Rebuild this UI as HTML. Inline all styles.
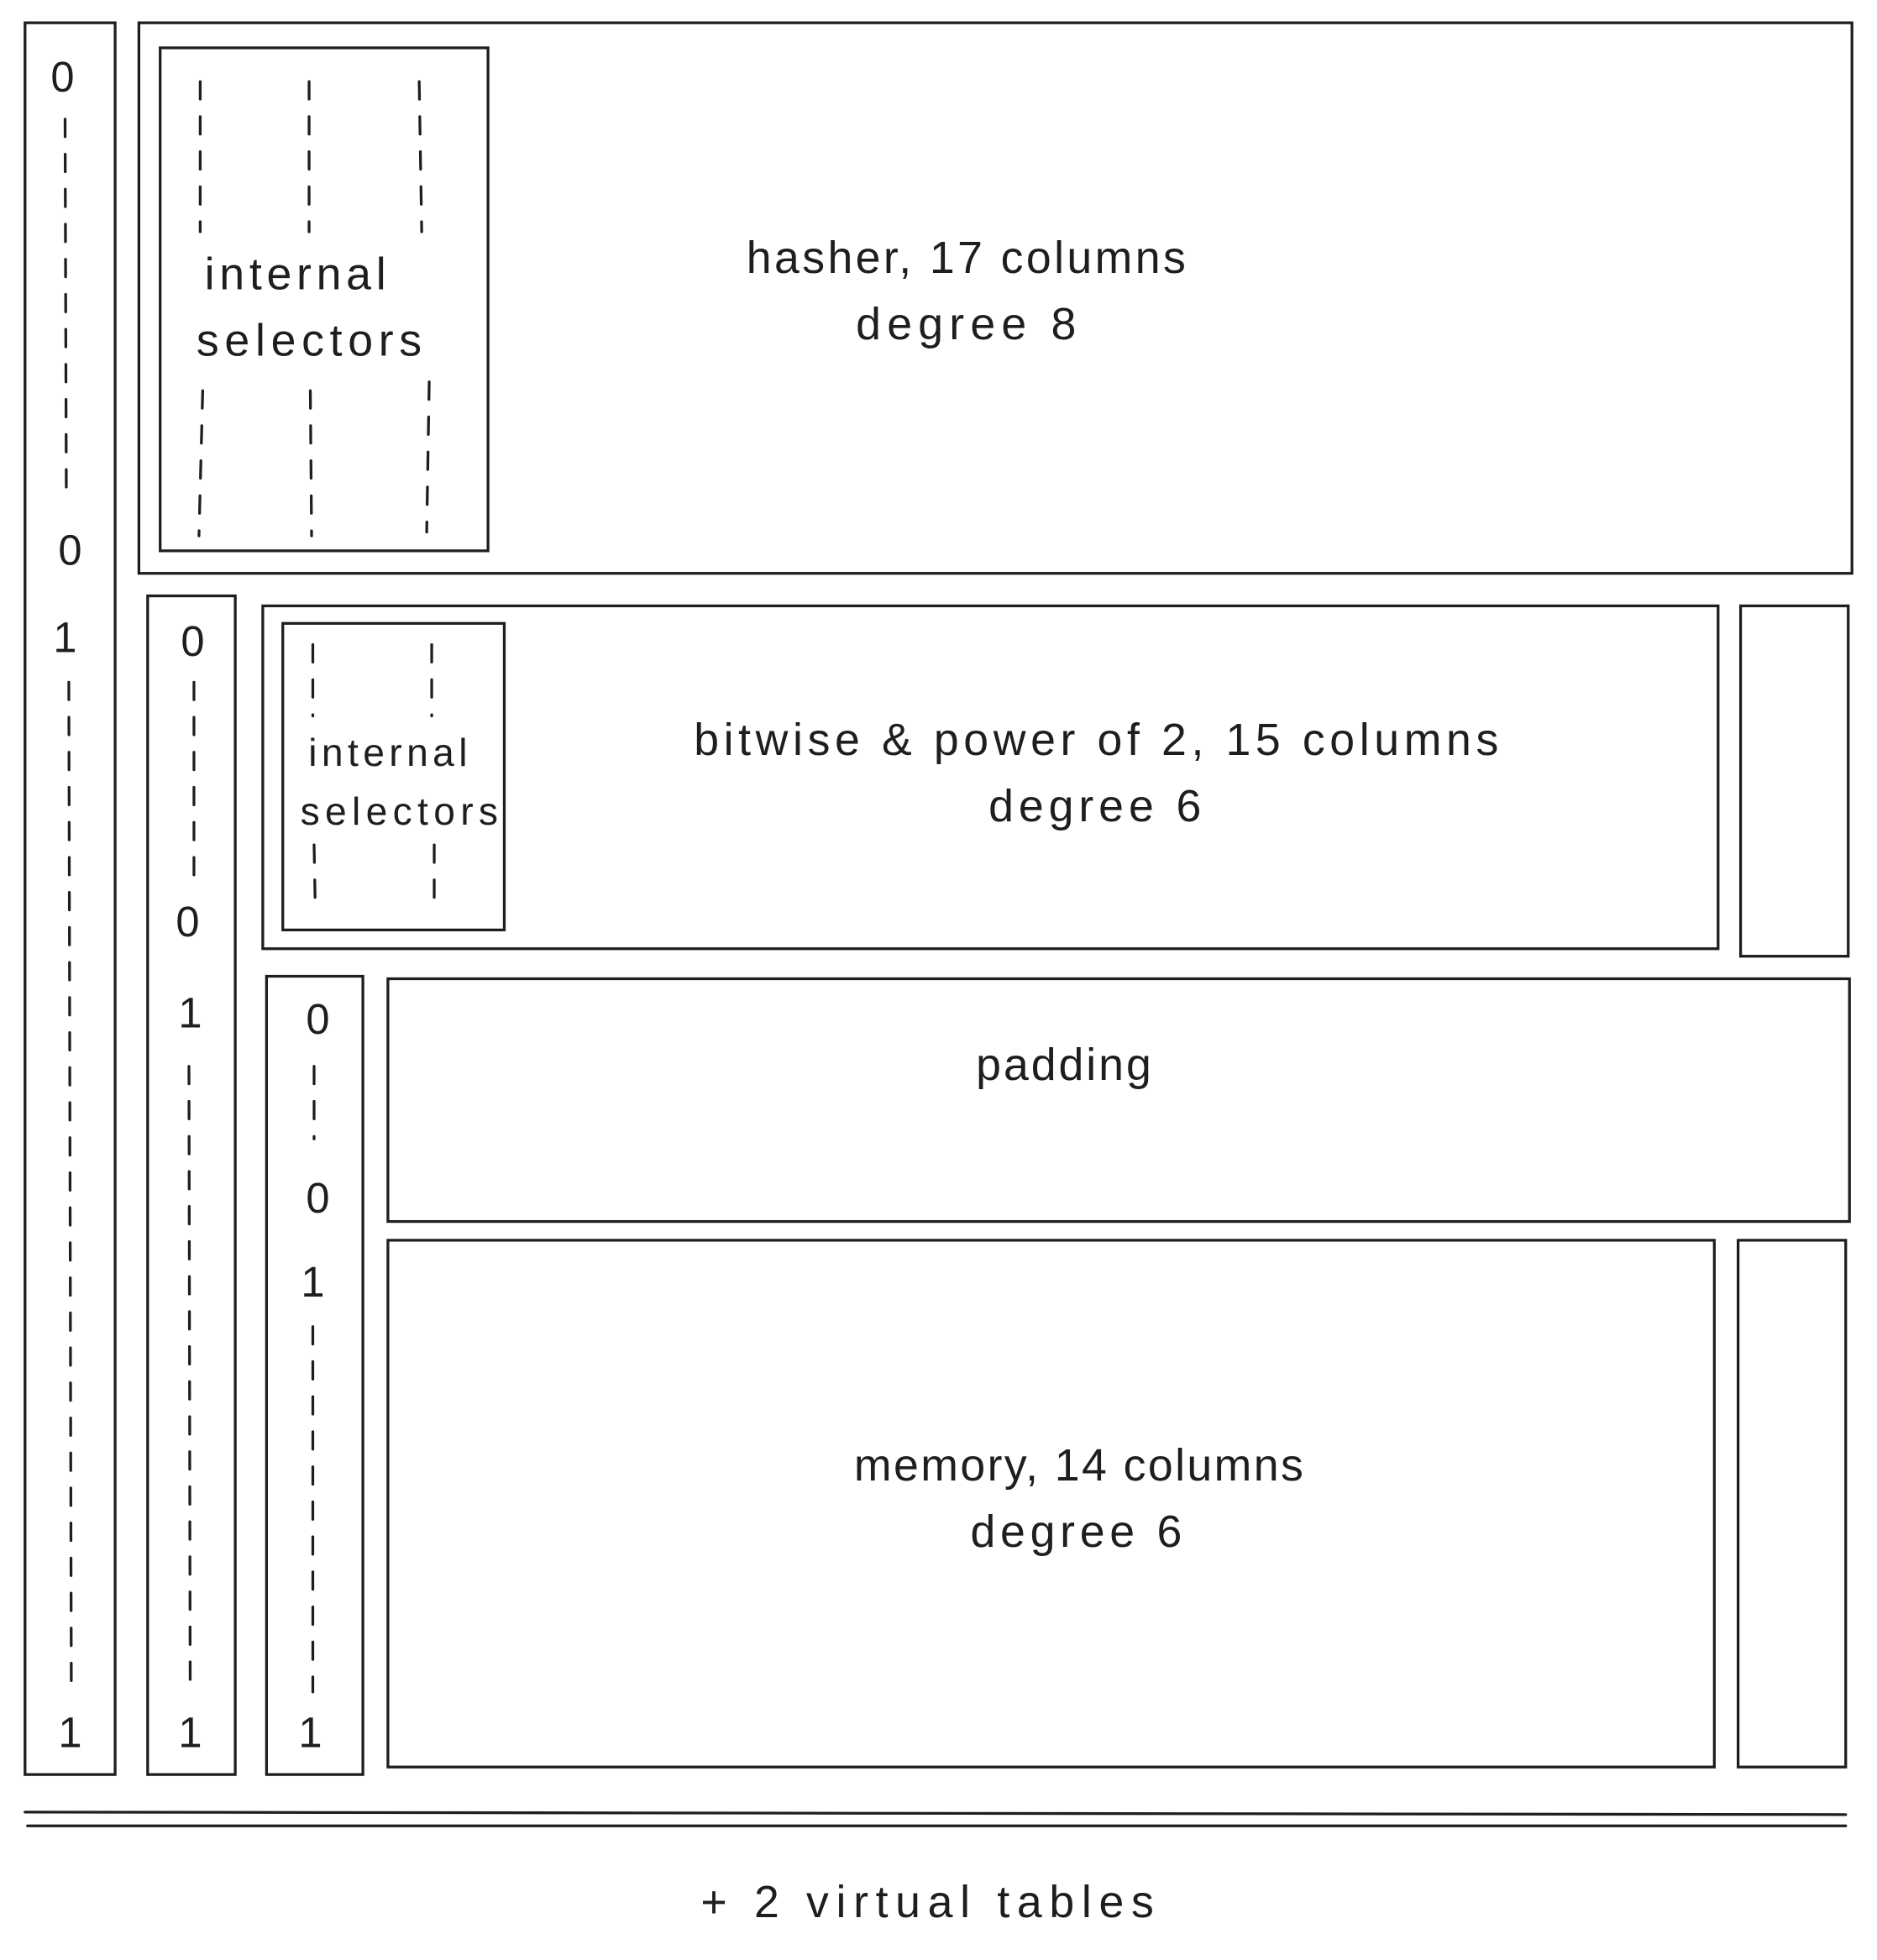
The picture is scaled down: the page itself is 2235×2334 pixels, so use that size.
<!DOCTYPE html>
<html><head><meta charset="utf-8"><style>
html,body{margin:0;padding:0;background:#fff;}
svg{display:block}
text{font-family:"Liberation Sans",sans-serif;fill:#1e1e1e;text-anchor:middle}
</style></head><body>
<svg width="2235" height="2334" viewBox="0 0 1500 1566" xmlns="http://www.w3.org/2000/svg">
<g fill="none" stroke="#1e1e1e" stroke-width="2.2" stroke-linecap="round">
<rect x="20" y="18" width="72" height="1400"/>
<line x1="52" y1="95" x2="53" y2="395" stroke-dasharray="14 14"/>
<line x1="55" y1="545" x2="57" y2="1352" stroke-dasharray="14 14"/>
<rect x="111" y="18" width="1369" height="440"/>
<rect x="128" y="38" width="262" height="402"/>
<line x1="160" y1="65" x2="160" y2="185" stroke-dasharray="14 14"/>
<line x1="247" y1="65" x2="247" y2="185" stroke-dasharray="14 14"/>
<line x1="335" y1="65" x2="337" y2="185" stroke-dasharray="14 14"/>
<line x1="162" y1="312" x2="159" y2="428" stroke-dasharray="14 14"/>
<line x1="248" y1="312" x2="249" y2="428" stroke-dasharray="14 14"/>
<line x1="343" y1="305" x2="341" y2="425" stroke-dasharray="14 14"/>
<rect x="118" y="476" width="70" height="942"/>
<line x1="155" y1="545" x2="155" y2="705" stroke-dasharray="14 14"/>
<line x1="151" y1="852" x2="152" y2="1352" stroke-dasharray="14 14"/>
<rect x="210" y="484" width="1163" height="274"/>
<rect x="226" y="498" width="177" height="245"/>
<line x1="250" y1="515" x2="250" y2="572" stroke-dasharray="14 14"/>
<line x1="345" y1="515" x2="345" y2="572" stroke-dasharray="14 14"/>
<line x1="251" y1="675" x2="252" y2="728" stroke-dasharray="14 14"/>
<line x1="347" y1="675" x2="347" y2="728" stroke-dasharray="14 14"/>
<rect x="1391" y="484" width="86" height="280"/>
<rect x="213" y="780" width="77" height="638"/>
<line x1="251" y1="852" x2="251" y2="910" stroke-dasharray="14 14"/>
<line x1="250" y1="1060" x2="250" y2="1352" stroke-dasharray="14 14"/>
<rect x="310" y="782" width="1168" height="194"/>
<rect x="310" y="991" width="1060" height="421"/>
<rect x="1389" y="991" width="86" height="421"/>
<line x1="20" y1="1448" x2="1475" y2="1450"/>
<line x1="22" y1="1459" x2="1475" y2="1459"/>
</g>
<g font-size="34">
<text x="50" y="73">0</text><text x="56" y="451">0</text><text x="52" y="521">1</text><text x="56" y="1396">1</text>
<text x="154" y="524">0</text><text x="150" y="748">0</text><text x="152" y="821">1</text><text x="152" y="1396">1</text>
<text x="254" y="826">0</text><text x="254" y="969">0</text><text x="250" y="1036">1</text><text x="248" y="1396">1</text>
</g>
<g font-size="36" lengthAdjust="spacing">
<text x="772" y="218" textLength="351" lengthAdjust="spacing">hasher, 17 columns</text>
<text x="772" y="271" textLength="176" lengthAdjust="spacing">degree 8</text>
<text x="876" y="603" textLength="643" lengthAdjust="spacing">bitwise &amp; power of 2, 15 columns</text>
<text x="875" y="656" textLength="170" lengthAdjust="spacing">degree 6</text>
<text x="850" y="863" textLength="140" lengthAdjust="spacing">padding</text>
<text x="862" y="1183" textLength="359" lengthAdjust="spacing">memory, 14 columns</text>
<text x="860" y="1236" textLength="169" lengthAdjust="spacing">degree 6</text>
<text x="741" y="1532" textLength="362" lengthAdjust="spacing">+ 2 virtual tables</text>
<text x="236" y="231" textLength="145" lengthAdjust="spacing">internal</text>
<text x="247" y="284" textLength="180" lengthAdjust="spacing">selectors</text>
</g>
<g font-size="31">
<text x="310" y="612" textLength="127" lengthAdjust="spacing">internal</text>
<text x="319" y="659" textLength="158" lengthAdjust="spacing">selectors</text>
</g>
</svg>
</body></html>
